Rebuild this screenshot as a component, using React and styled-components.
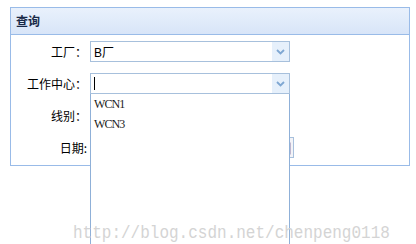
import React from "react";
import styled, { createGlobalStyle } from "styled-components";

const Global = createGlobalStyle`
  html, body { margin: 0; padding: 0; background: #fff; }
  body { font-family: "Liberation Sans", "Noto Sans CJK SC", sans-serif; font-size: 12px; color: #000; }
  #root { position: relative; width: 416px; height: 244px; overflow: hidden; }
`;

const Page = styled.div`
  padding: 7px 0 0 10px;
`;

const Panel = styled.section`
  width: 400px;
  box-sizing: border-box;
  border: 1px solid #99bbe8;
`;

const Header = styled.div`
  height: 26px;
  line-height: 26px;
  padding-left: 5px;
  background: linear-gradient(to bottom, #e9f1fc, #d8e5f8);
  border-bottom: 1px solid #99bbe8;
  font-family: "Noto Sans CJK SC", sans-serif;
  font-weight: bold;
  font-size: 12px;
  color: #1a2a48;
`;

const Form = styled.div`
  display: grid;
  grid-template-columns: 76px auto;
  column-gap: 3px;
  row-gap: 11px;
  padding: 6px 0 7px 0;
  justify-content: start;
`;

const Label = styled.label`
  text-align: right;
  font-family: "Noto Sans CJK SC", sans-serif;
  font-size: 12px;
  line-height: 21px;
  height: 21px;
  color: #000;
`;

const FieldWrap = styled.div`
  position: relative;
  z-index: ${(p) => (p.$raised ? 2 : 1)};
`;

const Field = styled.div`
  display: flex;
  width: ${(p) => p.$width}px;
  height: 21px;
  box-sizing: border-box;
  border: 1px solid #a7c0dc;
  background: #fff;
`;

const FieldText = styled.div`
  flex: 1;
  display: flex;
  align-items: center;
  padding-left: 3px;
  font-family: "Liberation Sans", "Noto Sans CJK SC", sans-serif;
  font-size: 12px;
  color: #000;
`;

const Caret = styled.span`
  display: block;
  width: 1px;
  height: 13px;
  background: #000;
`;

const Trigger = styled.div`
  width: 17px;
  display: flex;
  align-items: center;
  justify-content: center;
  background: ${(p) => (p.$date ? "#f3f3f7" : "#e6f0fb")};
  border-left: ${(p) => (p.$date ? "1px solid #c8c8d8" : "none")};
`;

const List = styled.ul`
  position: absolute;
  top: 100%;
  left: 0;
  width: 200px;
  height: 170px;
  margin: 0;
  padding: 0;
  list-style: none;
  box-sizing: border-box;
  border: 1px solid #8fb0d8;
  border-top: none;
  background: #fff;
`;

const Item = styled.li`
  height: 20px;
  line-height: 20px;
  padding-left: 3px;
  font-family: "Liberation Serif", serif;
  font-size: 12px;
  letter-spacing: -0.9px;
  color: #1a1a1a;
`;

const Watermark = styled.div`
  position: absolute;
  left: 73px;
  top: 223px;
  font-family: "Liberation Mono", "Courier New", monospace;
  font-size: 16px;
  line-height: 20px;
  color: #d4d4d4;
  transform: scaleY(1.2);
  transform-origin: left center;
  white-space: nowrap;
  z-index: 3;
  pointer-events: none;
`;

const Chevron = () => (
  <svg width="9" height="6" viewBox="0 0 9 6">
    <path d="M1 1 L4.5 4.5 L8 1" fill="none" stroke="#7fa7d2" strokeWidth="1.8" />
  </svg>
);

const Calendar = () => (
  <svg width="12" height="14" viewBox="0 0 12 14">
    <rect x="1" y="2" width="10" height="11" fill="#fff" stroke="#8a7aa8" />
    <rect x="1" y="2" width="10" height="3" fill="#b090c0" />
  </svg>
);

const Combo = ({ value, caret }) => (
  <Field $width={200}>
    <FieldText>{caret ? <Caret /> : value}</FieldText>
    <Trigger>
      <Chevron />
    </Trigger>
  </Field>
);

export default function App() {
  return (
    <>
      <Global />
      <Page>
        <Panel>
          <Header>查询</Header>
          <Form>
            <Label>工厂：</Label>
            <FieldWrap>
              <Combo value="B厂" />
            </FieldWrap>

            <Label>工作中心：</Label>
            <FieldWrap $raised>
              <Combo caret />
              <List>
                <Item>WCN1</Item>
                <Item>WCN3</Item>
              </List>
            </FieldWrap>

            <Label>线别：</Label>
            <FieldWrap>
              <Combo value="" />
            </FieldWrap>

            <Label>日期:</Label>
            <FieldWrap>
              <Field $width={204}>
                <FieldText />
                <Trigger $date>
                  <Calendar />
                </Trigger>
              </Field>
            </FieldWrap>
          </Form>
        </Panel>
      </Page>
      <Watermark>http://blog.csdn.net/chenpeng0118</Watermark>
    </>
  );
}
